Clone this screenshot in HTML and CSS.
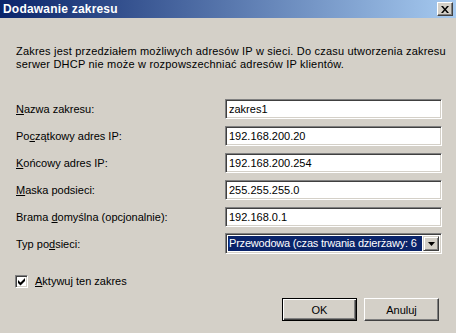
FILE: index.html
```html
<!DOCTYPE html>
<html lang="pl">
<head>
<meta charset="utf-8">
<title>Dodawanie zakresu</title>
<link rel="stylesheet" href="styles.css">
</head>
<body>
<div class="window">
  <div class="titlebar">
    <span class="title">Dodawanie zakresu</span>
    <span class="close">
      <svg width="8" height="7" viewBox="0 0 8 7"><path d="M0 0h2l2 2.5L6 0h2L5 3.5 8 7H6L4 4.5 2 7H0l3-3.5z" fill="#000"/></svg>
    </span>
  </div>
  <p class="desc">Zakres jest przedziałem możliwych adresów IP w sieci. Do czasu utworzenia zakresu serwer DHCP nie może w rozpowszechniać adresów IP klientów.</p>
  <div class="form">
    <label class="lbl"><u class="mn">N</u>azwa zakresu:</label>
    <div class="field">zakres1</div>
    <label class="lbl">Po<u class="mn">c</u>zątkowy adres IP:</label>
    <div class="field">192.168.200.20</div>
    <label class="lbl"><u class="mn">K</u>ońcowy adres IP:</label>
    <div class="field">192.168.200.254</div>
    <label class="lbl"><u class="mn">M</u>aska podsieci:</label>
    <div class="field">255.255.255.0</div>
    <label class="lbl">Brama <u class="mn">d</u>omyślna (opcjonalnie):</label>
    <div class="field">192.168.0.1</div>
    <label class="lbl lbl-sel">Typ po<u class="mn">d</u>sieci:</label>
    <div class="combo">
      <span class="combo-text">Przewodowa (czas trwania dzierżawy: 6</span>
      <span class="combo-btn"><svg width="7" height="4" viewBox="0 0 7 4"><path d="M0 0h7L3.5 4z" fill="#000"/></svg></span>
    </div>
  </div>
  <div class="check-row">
    <span class="checkbox"><svg width="9" height="9" viewBox="0 0 9 9"><path d="M1 3 3.5 5.5 8 1V4L3.5 8.5 1 6z" fill="#000"/></svg></span>
    <span class="check-label"><u class="mn">A</u>ktywuj ten zakres</span>
  </div>
  <div class="buttons">
    <button class="btn btn-default">OK</button>
    <button class="btn">Anuluj</button>
  </div>
</div>
</body>
</html>
```

FILE: styles.css
```css
html, body {
  margin: 0;
  padding: 0;
  background: #d4d0c8;
}
.window {
  width: 456px;
  height: 333px;
  background: #d4d0c8;
  font-family: "Liberation Sans", Arial, sans-serif;
  font-size: 11px;
  color: #000;
  overflow: hidden;
}
.titlebar {
  height: 18px;
  display: flex;
  align-items: center;
  justify-content: space-between;
  padding: 0 3px 0 3px;
  background: linear-gradient(to right, #0a246a, #a6caf0);
}
.title {
  color: #fff;
  font-weight: bold;
  font-size: 12px;
  letter-spacing: 0.2px;
}
.close {
  width: 16px;
  height: 14px;
  box-sizing: border-box;
  background: #d4d0c8;
  border-top: 1px solid #fff;
  border-left: 1px solid #fff;
  border-right: 1px solid #404040;
  border-bottom: 1px solid #404040;
  box-shadow: inset -1px -1px 0 #808080;
  display: flex;
  align-items: center;
  justify-content: center;
  padding-right: 1px;
}
.desc {
  margin: 27px 6px 0 16px;
  line-height: 13px;
  letter-spacing: 0.2px;
}
.form {
  margin-top: 28px;
  margin-left: 16px;
  display: grid;
  grid-template-columns: 209px 217px;
  grid-auto-rows: 20px;
  row-gap: 7px;
  align-items: center;
}
.mn {
  text-decoration: underline;
}
.lbl {
  line-height: 13px;
}
.field {
  height: 20px;
  box-sizing: border-box;
  background: #fff;
  border-top: 1px solid #808080;
  border-left: 1px solid #808080;
  border-right: 1px solid #fff;
  border-bottom: 1px solid #fff;
  box-shadow: inset 1px 1px 0 #404040, inset -1px -1px 0 #d4d0c8;
  padding: 0 3px;
  line-height: 18px;
  white-space: nowrap;
  overflow: hidden;
}
.combo {
  height: 21px;
  margin-top: -1px;
  box-sizing: border-box;
  background: #fff;
  border-top: 1px solid #808080;
  border-left: 1px solid #808080;
  border-right: 1px solid #fff;
  border-bottom: 1px solid #fff;
  box-shadow: inset 1px 1px 0 #404040, inset -1px -1px 0 #d4d0c8;
  padding: 2px;
  display: flex;
  align-items: stretch;
  gap: 1px;
}
.combo-text {
  flex: 1;
  min-width: 0;
  background: #0a246a;
  color: #fff;
  line-height: 15px;
  padding-left: 1px;
  white-space: nowrap;
  overflow: hidden;
  font-size: 11px;
  letter-spacing: -0.2px;
}
.combo-btn {
  width: 16px;
  flex: none;
  box-sizing: border-box;
  background: #d4d0c8;
  border-top: 1px solid #d4d0c8;
  border-left: 1px solid #d4d0c8;
  border-right: 1px solid #404040;
  border-bottom: 1px solid #404040;
  box-shadow: inset 1px 1px 0 #fff, inset -1px -1px 0 #808080;
  display: flex;
  align-items: center;
  justify-content: center;
}
.check-row {
  margin-top: 21px;
  margin-left: 15px;
  display: flex;
  align-items: center;
  gap: 7px;
  height: 13px;
}
.checkbox {
  width: 13px;
  height: 13px;
  box-sizing: border-box;
  background: #fff;
  border-top: 1px solid #808080;
  border-left: 1px solid #808080;
  border-right: 1px solid #fff;
  border-bottom: 1px solid #fff;
  box-shadow: inset 1px 1px 0 #404040, inset -1px -1px 0 #d4d0c8;
  display: flex;
  align-items: center;
  justify-content: center;
}
.check-label {
  line-height: 13px;
}
.buttons {
  margin-top: 10px;
  padding-right: 17px;
  display: flex;
  justify-content: flex-end;
  gap: 7px;
}
.btn {
  width: 75px;
  height: 23px;
  box-sizing: border-box;
  margin: 0;
  padding: 0;
  background: #d4d0c8;
  font-family: "Liberation Sans", Arial, sans-serif;
  font-size: 11px;
  color: #000;
  border-top: 1px solid #fff;
  border-left: 1px solid #fff;
  border-right: 1px solid #404040;
  border-bottom: 1px solid #404040;
  box-shadow: inset -1px -1px 0 #808080;
}
.btn-default {
  border: 1px solid #000;
  box-shadow: inset 1px 1px 0 #fff, inset -1px -1px 0 #404040, inset -2px -2px 0 #808080;
}
```
